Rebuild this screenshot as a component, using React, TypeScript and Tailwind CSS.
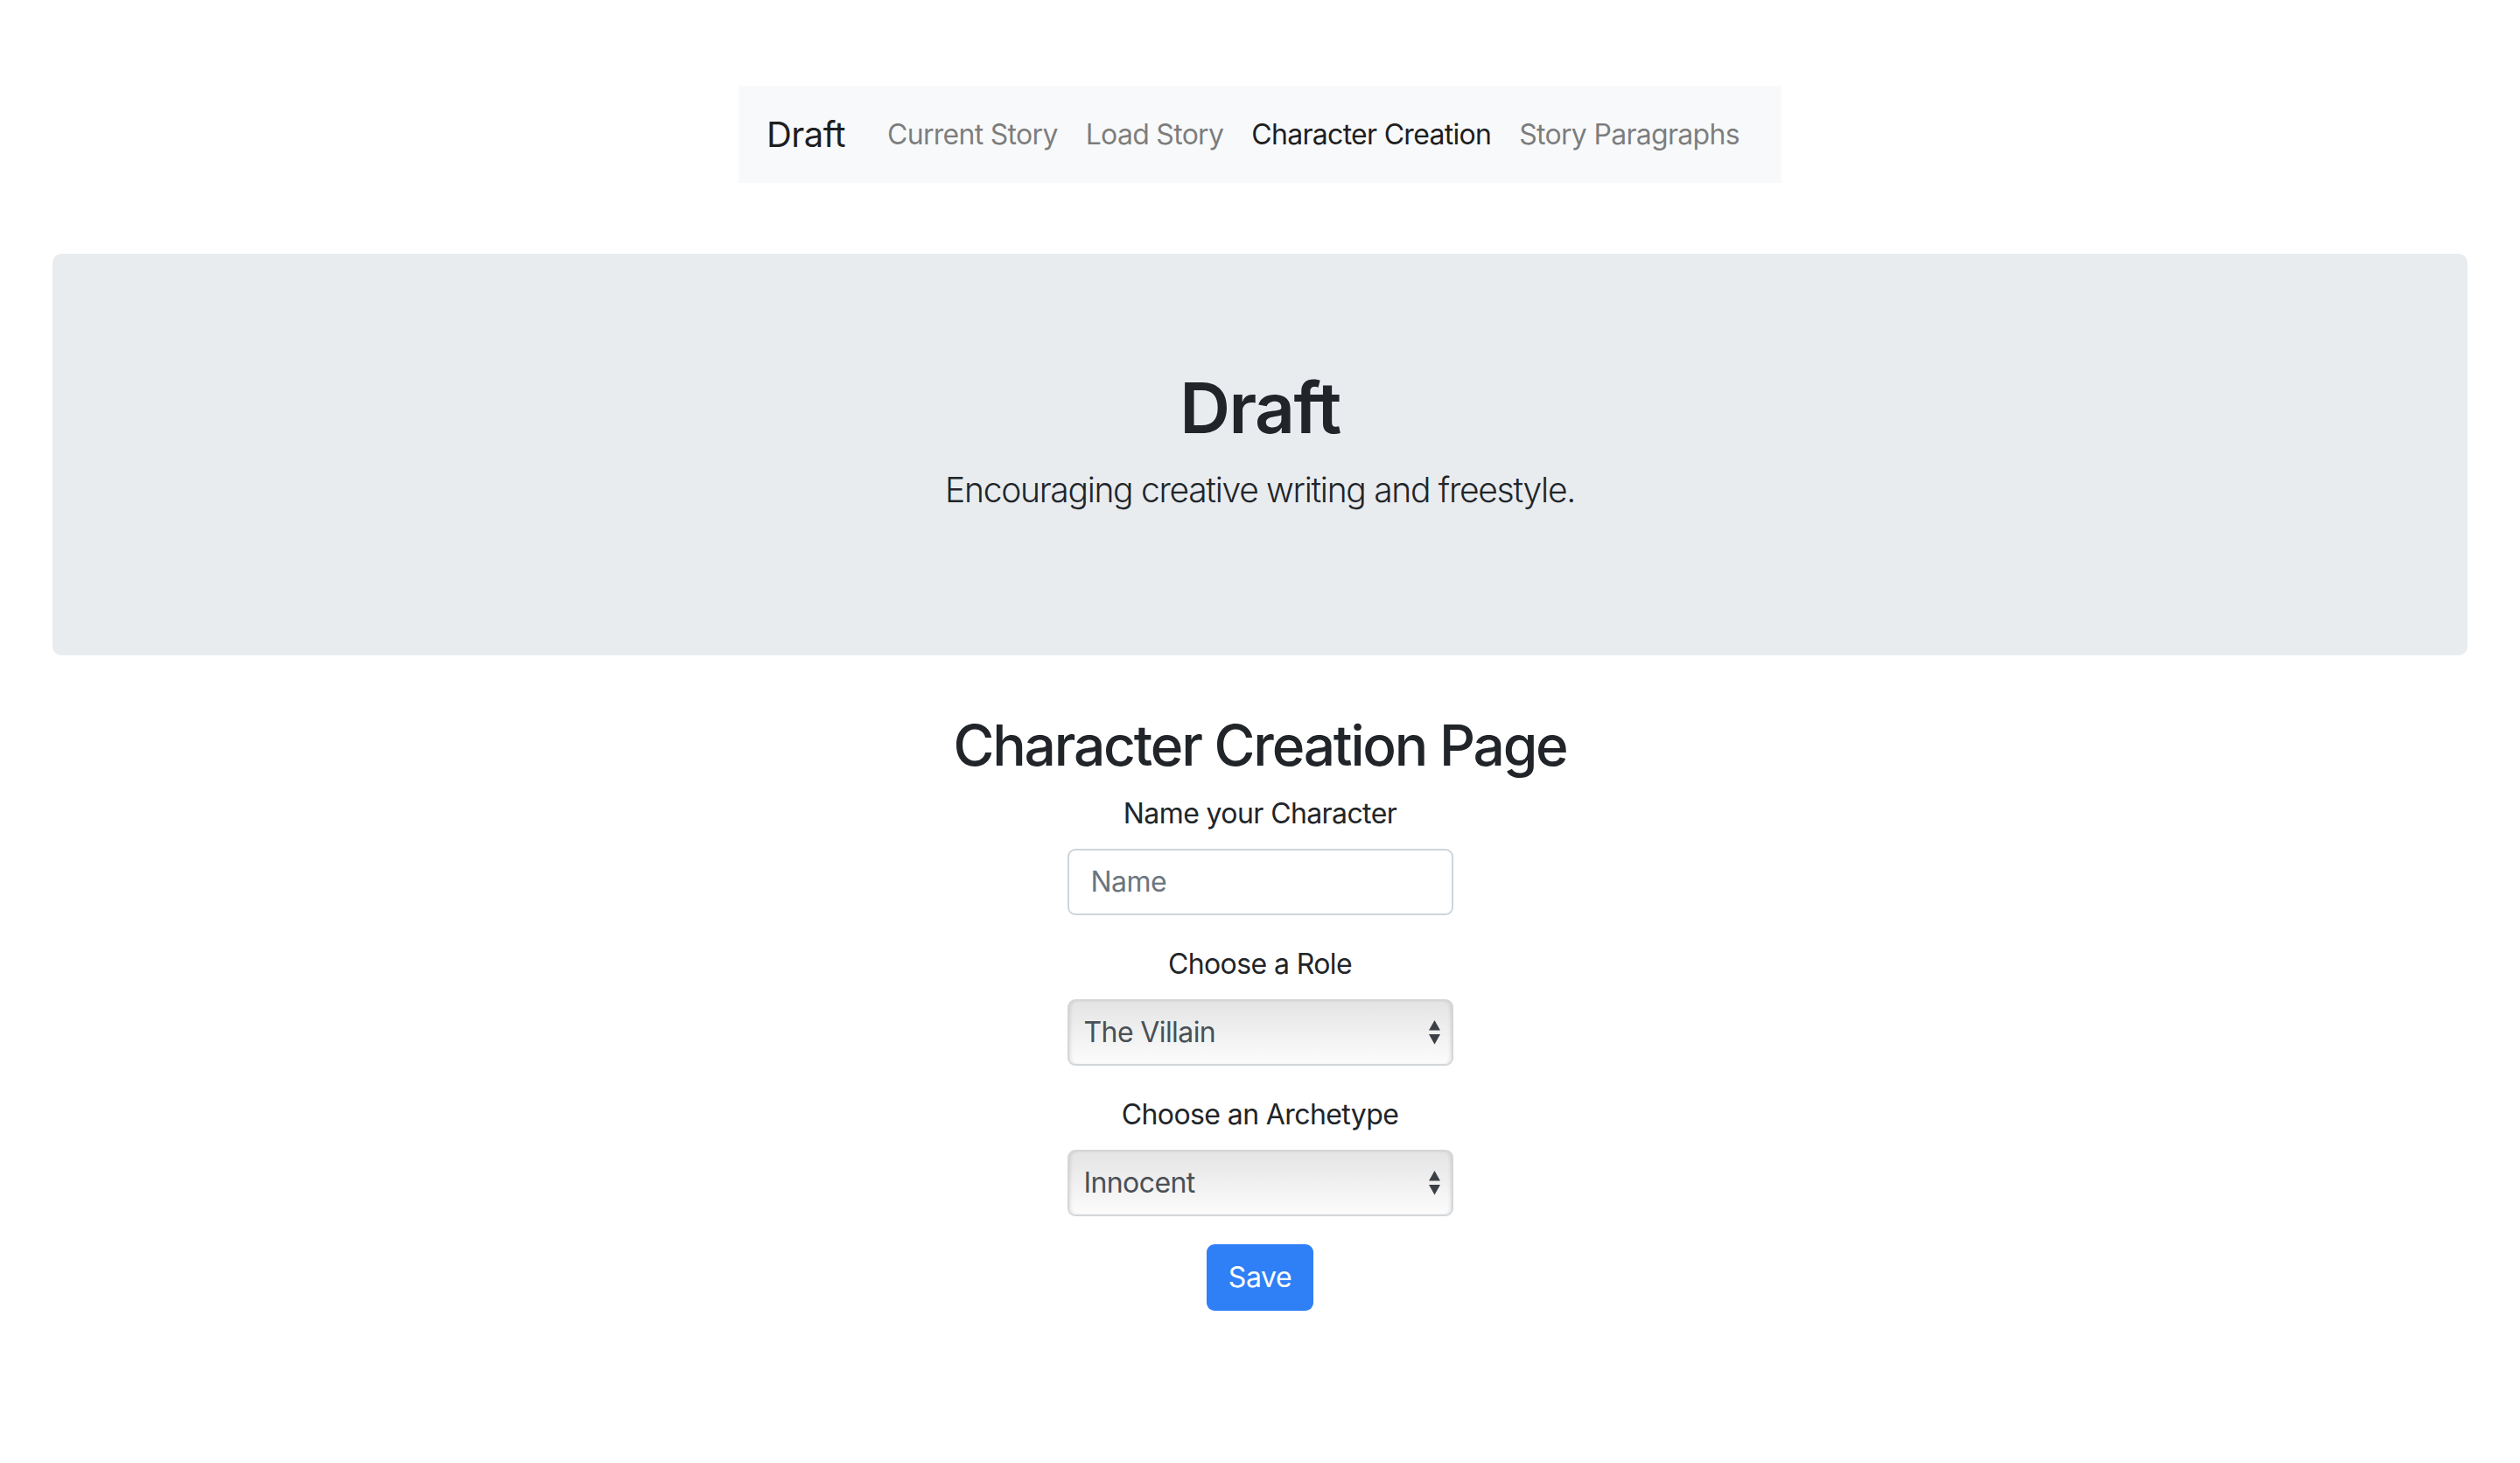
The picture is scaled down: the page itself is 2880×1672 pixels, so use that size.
import React from "react";

function Arrows() {
  return (
    <svg width="15" height="30" viewBox="0 0 15 30" className="shrink-0">
      <path d="M7.5 1 L14 12.5 L1 12.5 Z" fill="#3b4046" />
      <path d="M1 17 L14 17 L7.5 28.5 Z" fill="#3b4046" />
    </svg>
  );
}

function FakeSelect({ value }: { value: string }) {
  return (
    <div className="w-[441px] h-[76px] rounded-[9px] border-2 border-[#d3d6d9] bg-gradient-to-b from-[#e4e4e4] via-[#f0f0f0] to-[#fcfcfc] shadow-[inset_3px_0_4px_-2px_rgba(0,0,0,0.12),inset_-3px_0_4px_-2px_rgba(0,0,0,0.12)] flex items-center justify-between pl-[17px] pr-[12px]">
      <span className="text-[32px] text-[#495057] leading-none tracking-[-0.6px]">{value}</span>
      <Arrows />
    </div>
  );
}

export default function App() {
  const links = [
    { label: "Current Story", active: false },
    { label: "Load Story", active: false },
    { label: "Character Creation", active: true },
    { label: "Story Paragraphs", active: false },
  ];
  return (
    <div className="min-h-[1672px] bg-white font-['Inter','Noto_Sans',sans-serif] text-[#212529]">
      <div className="pt-[98px] flex justify-center">
        <nav className="bg-[#f8f9fa] h-[111px] px-[32px] flex items-center">
          <span className="text-[40px] mr-[32px] text-[rgba(0,0,0,0.9)] tracking-[-0.6px]">Draft</span>
          {links.map((l) => (
            <span
              key={l.label}
              className={
                l.active
                  ? "px-[16px] text-[32px] text-[rgba(0,0,0,0.9)] tracking-[-0.7px]"
                  : "px-[16px] text-[32px] text-[rgba(0,0,0,0.5)] tracking-[-0.7px]"
              }
            >
              {l.label}
            </span>
          ))}
        </nav>
      </div>

      <div className="mx-[60px] mt-[81px] bg-[#e9ecef] rounded-[10px] h-[459px] flex flex-col items-center pt-[128px]">
        <h1 className="text-[80px] font-semibold leading-[96px] tracking-[-1.5px]">Draft</h1>
        <p className="mt-[16px] text-[39px] font-light leading-[60px] tracking-[-1.3px]">
          Encouraging creative writing and freestyle.
        </p>
      </div>

      <div className="mt-[64px] flex flex-col items-center">
        <h2 className="text-[64px] font-medium leading-[77px] tracking-[-2.2px]">Character Creation Page</h2>
        <label className="mt-[16px] text-[32px] leading-[48px] tracking-[-0.6px]">Name your Character</label>
        <div className="mt-[16px] w-[441px] h-[76px] rounded-[9px] border-2 border-[#ced4da] bg-white flex items-center pl-[25px]">
          <span className="text-[32px] text-[#6c757d] tracking-[-0.5px]">Name</span>
        </div>

        <label className="mt-[32px] text-[32px] leading-[48px] tracking-[-0.6px]">Choose a Role</label>
        <div className="mt-[16px]">
          <FakeSelect value="The Villain" />
        </div>

        <label className="mt-[32px] text-[32px] leading-[48px] tracking-[-0.6px]">Choose an Archetype</label>
        <div className="mt-[16px]">
          <FakeSelect value="Innocent" />
        </div>

        <button className="mt-[32px] w-[122px] h-[76px] rounded-[9px] bg-[#2f7ff6] text-white text-[32px] tracking-[-0.4px]">
          Save
        </button>
      </div>
    </div>
  );
}
